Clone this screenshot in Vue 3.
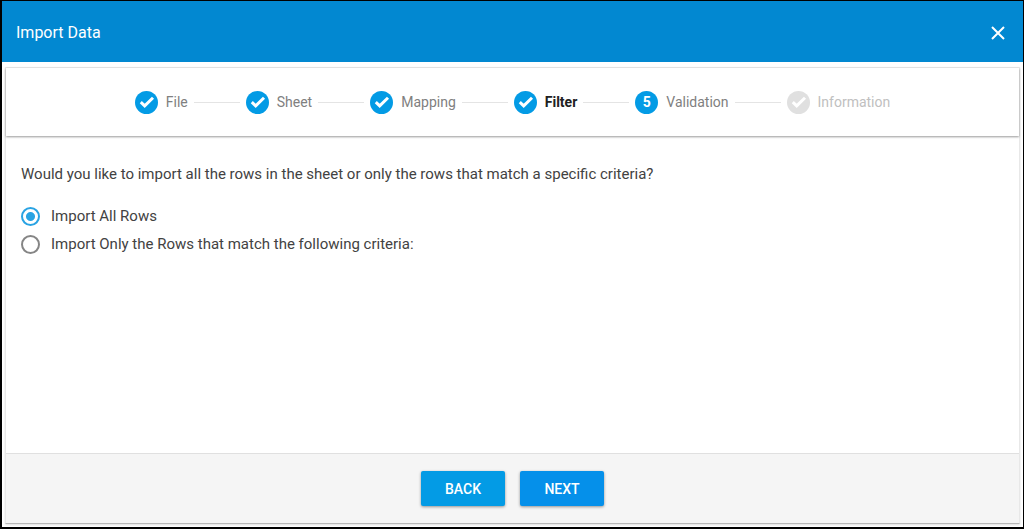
<script setup>
import { ref } from 'vue'

const steps = [
  { label: 'File', state: 'done' },
  { label: 'Sheet', state: 'done' },
  { label: 'Mapping', state: 'done' },
  { label: 'Filter', state: 'current' },
  { label: 'Validation', state: 'number' },
  { label: 'Information', state: 'disabled' }
]
const choice = ref('all')
</script>

<template>
  <main class="dialog">
    <header class="titlebar">
      <h1>Import Data</h1>
      <button class="close" type="button" aria-label="Close">
        <svg viewBox="0 0 14 14" width="14" height="14"><path d="M1 1L13 13M13 1L1 13" /></svg>
      </button>
    </header>

    <div class="panel">
      <ol class="stepper">
        <template v-for="(step, i) in steps" :key="step.label">
          <li v-if="i" class="line" role="presentation"></li>
          <li class="step" :class="step.state">
            <span class="dot">
              <template v-if="step.state === 'number'">{{ i + 1 }}</template>
              <svg v-else viewBox="0 0 23 23" width="23" height="23"><path d="M5.8 11.2L9.7 14.9L18 6.8" /></svg>
            </span>
            <span class="label">{{ step.label }}</span>
          </li>
        </template>
      </ol>

      <section class="content">
        <p id="question">Would you like to import all the rows in the sheet or only the rows that match a specific criteria?</p>
        <div class="options" role="radiogroup" aria-labelledby="question">
          <label><input v-model="choice" type="radio" name="rows" value="all" />Import All Rows</label>
          <label><input v-model="choice" type="radio" name="rows" value="match" />Import Only the Rows that match the following criteria:</label>
        </div>
      </section>

      <footer class="actions">
        <button class="back" type="button">BACK</button>
        <button class="next" type="button">NEXT</button>
      </footer>
    </div>
  </main>
</template>

<style>
body {
  margin: 0;
  background: #fff;
}
</style>

<style scoped>
.dialog {
  box-sizing: border-box;
  min-height: 100vh;
  display: flex;
  flex-direction: column;
  border: 2px solid #000;
  border-right-width: 1px;
  border-top-width: 1px;
  background: #fff;
  color: #424242;
  font: 15px/20px Roboto, sans-serif;
}
.titlebar {
  display: flex;
  align-items: center;
  justify-content: space-between;
  box-sizing: border-box;
  height: 61px;
  padding: 2px 18px 0 14px;
  background: #0288d1;
  color: #fff;
}
h1 {
  margin: 0;
  font-size: 16px;
  font-weight: 400;
  line-height: 20px;
}
button {
  border: 0;
  font-family: inherit;
  cursor: pointer;
}
.close {
  display: flex;
  padding: 0;
  background: none;
}
svg path {
  fill: none;
  stroke: #fff;
  stroke-width: 2;
}
.panel {
  flex: 1;
  display: flex;
  flex-direction: column;
  margin: 5px 3px 3px;
  border: 1px solid #e8e8e8;
  border-bottom-color: #b8b8b8;
  box-shadow: 0 1px 2px #0002;
}
.stepper {
  display: flex;
  align-items: center;
  justify-content: center;
  gap: 6px;
  height: 68px;
  margin: 0;
  padding: 0;
  list-style: none;
  box-shadow: 0 1px 2px #0006;
}
.line {
  width: 46px;
  height: 1px;
  background: #e4e4e4;
}
.step {
  display: flex;
  align-items: center;
  gap: 8px;
  color: #808080;
  font-size: 14px;
}
.dot {
  display: flex;
  align-items: center;
  justify-content: center;
  width: 23px;
  height: 23px;
  border-radius: 50%;
  background: #039be5;
  color: #fff;
  font-weight: 700;
}
.dot path {
  stroke-width: 3;
}
.current {
  color: #212121;
  font-weight: 700;
}
.disabled {
  color: #c0c0c0;
}
.disabled .dot {
  background: #e0e0e0;
}
.content {
  flex: 1;
  padding: 28px 15px;
}
p {
  margin: 0 0 18px;
}
.options {
  display: flex;
  flex-direction: column;
  align-items: flex-start;
}
label {
  display: flex;
  align-items: center;
  gap: 11px;
  min-height: 28px;
}
input {
  appearance: none;
  box-sizing: border-box;
  flex: none;
  width: 19px;
  height: 19px;
  margin: 0;
  border: 2px solid #858585;
  border-radius: 50%;
}
input:checked {
  border-color: #29a3e3;
  background: radial-gradient(circle, #29a3e3 4px, #fff 5px);
}
.actions {
  display: flex;
  align-items: center;
  justify-content: center;
  gap: 15px;
  height: 69px;
  border-top: 1px solid #e0e0e0;
  background: #f5f5f5;
}
.actions button {
  width: 84px;
  height: 35px;
  padding: 0;
  border-radius: 2px;
  background: #039be5;
  color: #fff;
  font-size: 14px;
  font-weight: 500;
  box-shadow: 0 1px 3px #0006;
}
.actions .next {
  background: #0590ea;
}
</style>
